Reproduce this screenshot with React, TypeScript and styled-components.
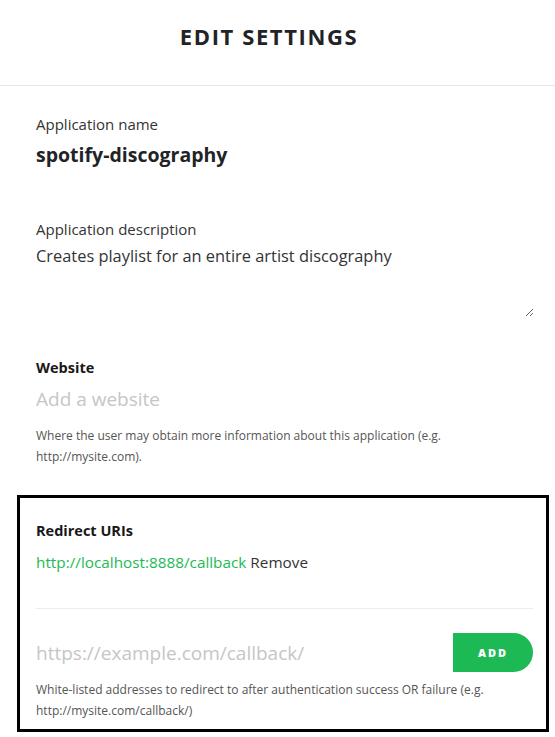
import React, { FC } from 'react';
import styled, { createGlobalStyle } from 'styled-components';

const GlobalStyle = createGlobalStyle`
	html, body {
		margin: 0;
		padding: 0;
		background: #fff;
	}
	body {
		font-family: 'Open Sans', 'Noto Sans', sans-serif;
		color: #222326;
	}
	* {
		box-sizing: border-box;
	}
`;

const Page = styled.div`
	width: 555px;
	min-height: 737px;
	background: #fff;
`;

const Header = styled.header`
	height: 86px;
	border-bottom: 1px solid #e6e6e6;
	display: flex;
	justify-content: center;
	padding: 21px 17px 0 0;
`;

const Title = styled.h1`
	margin: 0;
	font-size: 22px;
	line-height: 30px;
	font-weight: 700;
	letter-spacing: 1.6px;
	color: #222326;
`;

const Body = styled.div`
	padding: 28px 21px 0 36px;
	display: flex;
	flex-direction: column;
`;

const Field = styled.div<{ $gap?: number }>`
	display: flex;
	flex-direction: column;
	margin-bottom: ${(p) => p.$gap ?? 0}px;
`;

const Label = styled.label<{ $bold?: boolean }>`
	font-size: ${(p) => (p.$bold ? 14.5 : 15)}px;
	line-height: 20px;
	font-weight: ${(p) => (p.$bold ? 700 : 400)};
	color: ${(p) => (p.$bold ? '#181818' : '#333')};
`;

const AppName = styled.div`
	margin-top: 8px;
	font-size: 19.5px;
	line-height: 26px;
	font-weight: 700;
	color: #222326;
`;

const DescriptionArea = styled.textarea`
	margin-top: 6px;
	height: 72px;
	border: none;
	outline: none;
	padding: 0;
	resize: vertical;
	font-family: inherit;
	font-size: 16.4px;
	line-height: 22px;
	color: #333;
	background: transparent;
`;

const TextInput = styled.input`
	flex: 1;
	border: none;
	outline: none;
	padding: 0;
	font-family: inherit;
	font-size: 19px;
	line-height: 26px;
	height: 26px;
	color: #333;
	background: transparent;
	&::placeholder {
		color: #c6c6c6;
	}
`;

const Help = styled.p`
	margin: 13px 0 0;
	font-size: 12px;
	line-height: 21px;
	color: #555;
`;

const Highlight = styled.section`
	margin: 28px -15px 0 -19px;
	border: 3px solid #000;
	padding: 21px 13px 0 16px;
	height: 237px;
`;

const UriRow = styled.div`
	margin-top: 11px;
	font-size: 15.3px;
	line-height: 20px;
	color: #333;
`;

const UriLink = styled.a`
	color: #1db954;
	text-decoration: none;
	margin-right: 4px;
`;

const Divider = styled.hr`
	margin: 36px 0 0;
	border: none;
	border-top: 1px solid #ececec;
`;

const AddRow = styled.div`
	margin-top: 24px;
	display: flex;
	align-items: center;
`;

const AddButton = styled.button`
	width: 80px;
	height: 39px;
	border: none;
	border-radius: 0 20px 20px 0;
	background: #1db954;
	color: #fff;
	font-family: inherit;
	font-size: 11px;
	font-weight: 800;
	letter-spacing: 2px;
	cursor: pointer;
`;

const App: FC = () => {
	return (
		<Page>
			<GlobalStyle />
			<Header>
				<Title>EDIT SETTINGS</Title>
			</Header>
			<Body>
				<Field $gap={51}>
					<Label>Application name</Label>
					<AppName>spotify-discography</AppName>
				</Field>
				<Field $gap={41}>
					<Label>Application description</Label>
					<DescriptionArea defaultValue="Creates playlist for an entire artist discography" />
				</Field>
				<Field>
					<Label $bold>Website</Label>
					<TextInput style={{ marginTop: 8 }} placeholder="Add a website" />
					<Help>
						Where the user may obtain more information about this application (e.g.
						http://mysite.com).
					</Help>
				</Field>
				<Highlight>
					<Label $bold>Redirect URIs</Label>
					<UriRow>
						<UriLink href="#">http://localhost:8888/callback</UriLink>
						Remove
					</UriRow>
					<Divider />
					<AddRow>
						<TextInput placeholder="https://example.com/callback/" />
						<AddButton>ADD</AddButton>
					</AddRow>
					<Help style={{ marginTop: 7 }}>
						White-listed addresses to redirect to after authentication success OR failure (e.g.
						http://mysite.com/callback/)
					</Help>
				</Highlight>
			</Body>
		</Page>
	);
};

export default App;
